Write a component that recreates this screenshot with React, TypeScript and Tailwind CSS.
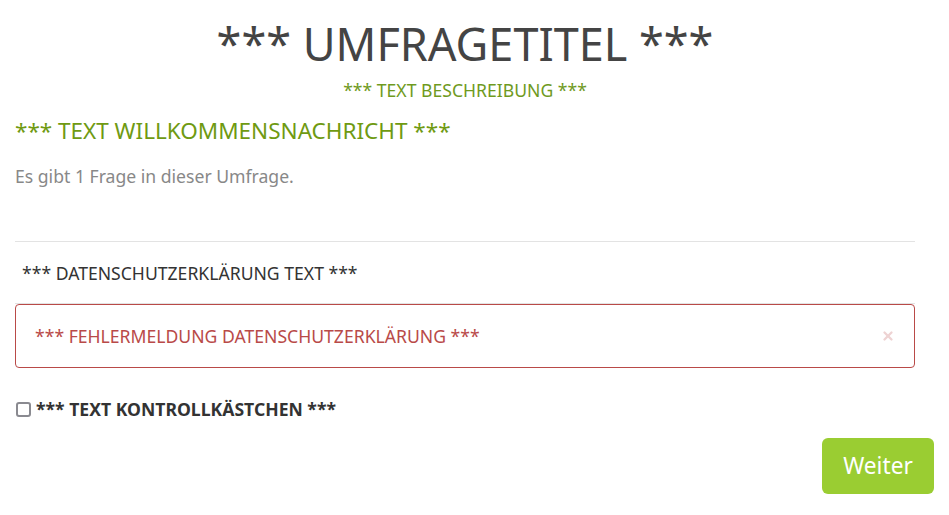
import { X } from "lucide-react";

const App = () => {
  return (
    <div
      className="min-h-[515px] w-[949px] bg-white text-[#444]"
      style={{ fontFamily: '"Noto Sans", "Open Sans", sans-serif' }}
    >
      <div className="px-[15px] pt-[14px]">
        <div className="w-[900px]">
          <h1 className="text-center text-[45px] leading-[60px] font-normal text-[#444]">
            *** UMFRAGETITEL ***
          </h1>
          <p className="mt-[5px] text-center text-[17.6px] leading-[22px] text-[#6f9a1e]">
            *** TEXT BESCHREIBUNG ***
          </p>
          <h2 className="mt-[15px] text-[22.5px] leading-[30px] text-[#6f9a12]">
            *** TEXT WILLKOMMENSNACHRICHT ***
          </h2>
          <p className="mt-[19px] text-[17.6px] leading-[22px] text-[#888]">
            Es gibt 1 Frage in dieser Umfrage.
          </p>
          <div className="mt-[54px] border-t border-[#e3e3e3]" />
          <p className="mt-[20px] pl-[7px] text-[17.6px] leading-[22px] text-[#333]">
            *** DATENSCHUTZERKLÄRUNG TEXT ***
          </p>
          <div className="mt-[19px] border-t border-[#e3e3e3]">
            <div className="flex h-[64px] items-center justify-between rounded-[4px] border border-[#b94a48] pl-[19px] pr-[19px] text-[17.6px] text-[#b94a48]">
              <span>*** FEHLERMELDUNG DATENSCHUTZERKLÄRUNG ***</span>
              <X className="h-[14px] w-[14px] text-[#eed3d3]" strokeWidth={4} />
            </div>
          </div>
          <label className="mt-[30px] flex items-center gap-[5px] pl-[1px] text-[17.6px] leading-[22px] font-bold text-[#333]">
            <span className="h-[15px] w-[15px] rounded-[3px] border-2 border-[#8a8a90] bg-white" />
            *** TEXT KONTROLLKÄSTCHEN ***
          </label>
        </div>
        <div className="mt-[18px] flex w-[919px] justify-end">
          <button className="h-[56px] w-[112px] rounded-[6px] bg-[#9acd32] text-[22.7px] text-white">
            Weiter
          </button>
        </div>
      </div>
    </div>
  );
};

export default App;
